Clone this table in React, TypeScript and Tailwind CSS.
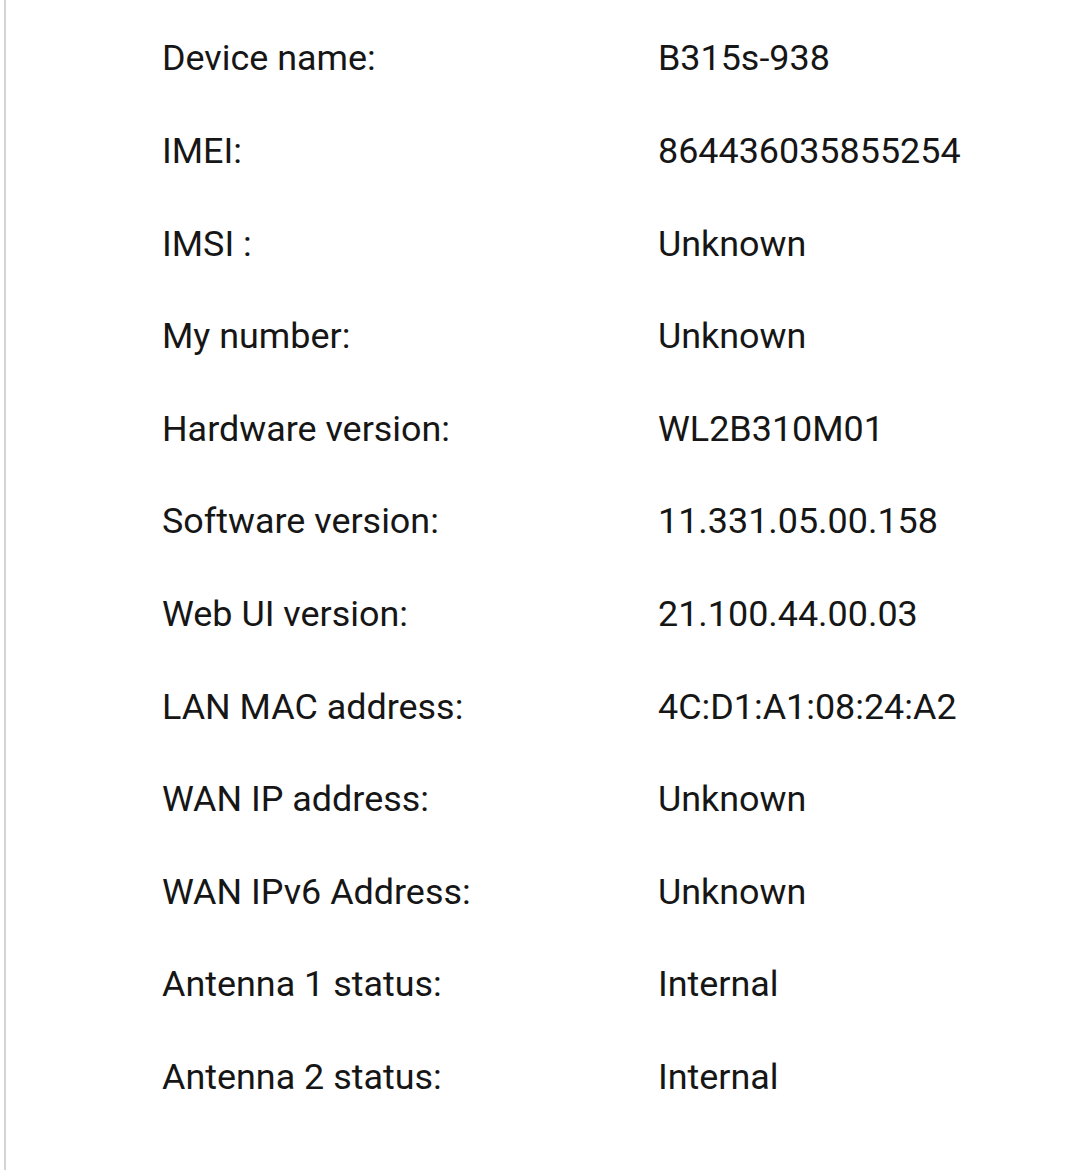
const rows: [string, string][] = [
  ["Device name:", "B315s-938"],
  ["IMEI:", "864436035855254"],
  ["IMSI :", "Unknown"],
  ["My number:", "Unknown"],
  ["Hardware version:", "WL2B310M01"],
  ["Software version:", "11.331.05.00.158"],
  ["Web UI version:", "21.100.44.00.03"],
  ["LAN MAC address:", "4C:D1:A1:08:24:A2"],
  ["WAN IP address:", "Unknown"],
  ["WAN IPv6 Address:", "Unknown"],
  ["Antenna 1 status:", "Internal"],
  ["Antenna 2 status:", "Internal"],
];

export default function App() {
  return (
    <div className="w-[1080px] h-[1170px] bg-white overflow-hidden font-['Roboto',sans-serif] text-[#161616]">
      <div className="ml-[4px] h-full border-l-2 border-[#d4d4d4] pt-[13px]">
        {rows.map(([label, value]) => (
          <div key={label} className="flex items-center h-[92.6px] text-[35.9px]">
            <div className="w-[652px] pl-[156px]">{label}</div>
            <div>{value}</div>
          </div>
        ))}
      </div>
    </div>
  );
}
